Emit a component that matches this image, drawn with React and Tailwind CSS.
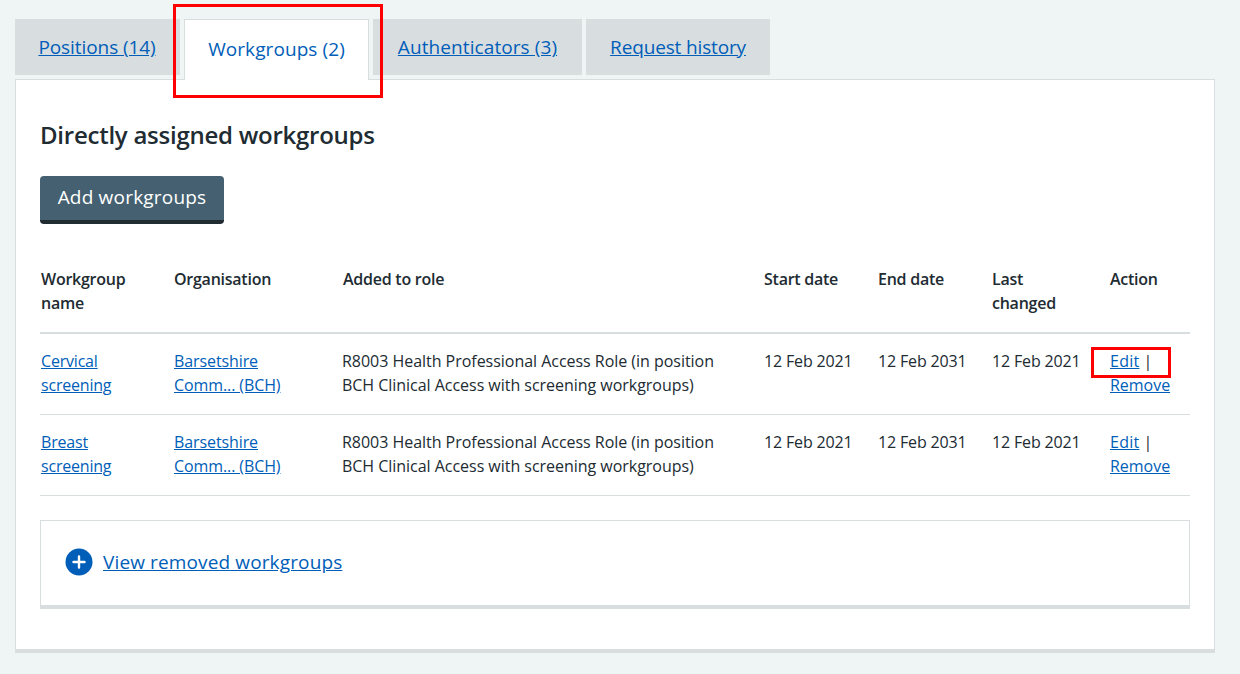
import React from "react";

const link = "text-[#005eb8] underline";

const rows = [
  { name: ["Cervical", "screening"] },
  { name: ["Breast", "screening"] },
];

const Tab = ({ label, width, spacing }) => (
  <div className={`${width} ${spacing} h-[56px] bg-[#d8dde0] flex items-center justify-center text-[19px]`}>
    <a href="#" className={link}>{label}</a>
  </div>
);

const App = () => {
  return (
    <div className="relative bg-[#eff4f4] min-h-[674px] pt-[19px] px-[15px] text-[#212b32] text-[16px] leading-[24px] font-['Open_Sans',sans-serif] tracking-[-0.03px] overflow-hidden">
      {/* tabs */}
      <div className="flex gap-[4px] items-start relative z-10">
        <Tab label="Positions (14)" width="w-[165px]" spacing="tracking-[-0.08px] pr-[1px]" />
        <div className="w-[185px] h-[61px] bg-white border border-[#d8dde0] border-b-0 flex items-center justify-center pb-[2px] text-[19px] text-[#005eb8] tracking-[0.08px]">
          Workgroups (2)
        </div>
        <Tab label="Authenticators (3)" width="w-[209px]" spacing="tracking-[0.09px]" />
        <Tab label="Request history" width="w-[184px]" spacing="tracking-[-0.15px]" />
      </div>

      {/* panel */}
      <div className="w-[1200px] h-[574px] -mt-[1px] bg-white border border-[#d8dde0] border-b-4 px-[24px] pt-[39px]">
        <h2 className="text-[24px] leading-[32px] font-semibold tracking-[-0.25px]">Directly assigned workgroups</h2>
        <button className="block mt-[25px] w-[184px] h-[48px] bg-[#456171] border-b-4 border-[#212b32] rounded-[4px] text-white text-[19px] leading-[24px] pb-[2px] tracking-[0.2px]">
          Add workgroups
        </button>

        <table className="mt-[43px] w-[1150px] table-fixed border-collapse">
          <thead>
            <tr className="border-b-2 border-[#d8dde0] text-left align-top tracking-[-0.25px]">
              <th className="w-[133px] font-semibold pl-[1px] pr-[8px] pb-[17px]">Workgroup<br />name</th>
              <th className="w-[169px] font-semibold pl-[1px] pb-[17px]">Organisation</th>
              <th className="w-[421px] font-semibold pl-[1px] pb-[17px]">Added to role</th>
              <th className="w-[114px] font-semibold pl-[1px] pb-[17px]">Start date</th>
              <th className="w-[114px] font-semibold pl-[1px] pb-[17px]">End date</th>
              <th className="w-[118px] font-semibold pl-[1px] pb-[17px]">Last<br />changed</th>
              <th className="font-semibold pl-[1px] pb-[17px]">Action</th>
            </tr>
          </thead>
          <tbody>
            {rows.map((row) => (
              <tr key={row.name[0]} className="border-b border-[#d8dde0] align-top">
                <td className="pl-[1px] pt-[15px] pb-[17px] tracking-[-0.2px]">
                  <a href="#" className={link}>{row.name[0]}<br />{row.name[1]}</a>
                </td>
                <td className="pl-[1px] pt-[15px] pb-[17px] tracking-[-0.1px]">
                  <a href="#" className={link}>Barsetshire<br />Comm... (BCH)</a>
                </td>
                <td className="pt-[15px] pb-[17px] whitespace-nowrap">
                  R8003 Health Professional Access Role (in position<br />
                  BCH Clinical Access with screening workgroups)
                </td>
                <td className="pl-[1px] pt-[15px] whitespace-nowrap tracking-[-0.15px]">12 Feb 2021</td>
                <td className="pl-[1px] pt-[15px] whitespace-nowrap tracking-[-0.15px]">12 Feb 2031</td>
                <td className="pl-[1px] pt-[15px] whitespace-nowrap tracking-[-0.15px]">12 Feb 2021</td>
                <td className="pl-[1px] pt-[15px]">
                  <a href="#" className={`${link} tracking-[0.25px]`}>Edit</a><span className="ml-[4px]">|</span><br />
                  <a href="#" className={link}>Remove</a>
                </td>
              </tr>
            ))}
          </tbody>
        </table>

        <div className="mt-[24px] w-[1150px] h-[89px] border border-[#d8dde0] border-b-4 flex items-center pl-[24px] pb-[2px] gap-[10px]">
          <svg width="28" height="28" viewBox="0 0 28 28" className="shrink-0">
            <circle cx="14" cy="14" r="13.5" fill="#005eb8" />
            <path d="M14 8.5v11M8.5 14h11" stroke="#fff" strokeWidth="2.4" strokeLinecap="round" />
          </svg>
          <a href="#" className={`${link} text-[19px] tracking-[0.13px]`}>View removed workgroups</a>
        </div>
      </div>

      {/* annotation boxes */}
      <div className="absolute z-20 left-[173px] top-[4px] w-[210px] h-[94px] border-[3px] border-[#ff0000]" />
      <div className="absolute z-20 left-[1091px] top-[347px] w-[80px] h-[31px] border-[3px] border-[#ff0000]" />
    </div>
  );
};

export default App;
